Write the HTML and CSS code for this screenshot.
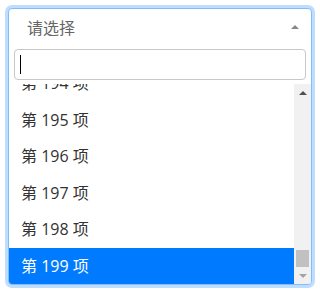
FILE: index.html
```html
<!DOCTYPE html>
<html lang="zh-CN">
<head>
<meta charset="utf-8">
<title>请选择</title>
<link rel="stylesheet" href="styles.css">
</head>
<body>
<div class="select">
  <div class="selection">
    <span class="placeholder">请选择</span>
    <span class="arrow"></span>
  </div>
  <div class="search-wrap">
    <input class="search" type="search">
    <span class="caret"></span>
  </div>
  <div class="results">
    <ul class="options">
      <li class="option">第 194 项</li>
      <li class="option">第 195 项</li>
      <li class="option">第 196 项</li>
      <li class="option">第 197 项</li>
      <li class="option">第 198 项</li>
      <li class="option selected">第 199 项</li>
    </ul>
    <div class="scrollbar">
      <div class="sb-btn"><span class="sb-up"></span></div>
      <div class="sb-track"><div class="sb-thumb"></div></div>
      <div class="sb-btn"><span class="sb-down"></span></div>
    </div>
  </div>
</div>
</body>
</html>
```

FILE: styles.css
```css
html, body {
  margin: 0;
  padding: 0;
  background: #fff;
}
body {
  padding: 8px;
  font-family: "Open Sans", "Noto Sans CJK SC", sans-serif;
  font-size: 16px;
  color: #333;
}
.select {
  border: 1px solid #80bdff;
  border-radius: 4px;
  box-shadow: 0 0 0 3px rgba(0, 123, 255, 0.25);
  overflow: hidden;
  background: #fff;
}
.selection {
  height: 37px;
  display: flex;
  align-items: center;
  justify-content: space-between;
  padding: 0 12px 0 18px;
}
.placeholder {
  color: #666;
  line-height: 24px;
}
.arrow {
  width: 0;
  height: 0;
  border-left: 4px solid transparent;
  border-right: 4px solid transparent;
  border-bottom: 4px solid #888;
  margin-top: -2px;
}
.search-wrap {
  position: relative;
  padding: 3px 5px 4px;
}
.search {
  display: block;
  box-sizing: border-box;
  width: 100%;
  height: 31px;
  border: 1px solid #c8c8c8;
  border-radius: 4px;
  padding: 0 5px;
  font: inherit;
  outline: none;
}
.caret {
  position: absolute;
  left: 11px;
  top: 9px;
  width: 1px;
  height: 19px;
  background: #000;
}
.results {
  display: flex;
  height: 200px;
}
.options {
  flex: 1;
  list-style: none;
  margin: 0;
  padding: 0;
  display: flex;
  flex-direction: column;
  justify-content: flex-end;
  overflow: hidden;
}
.option {
  flex: none;
  height: 36.5px;
  line-height: 36.5px;
  padding: 0 12px;
  white-space: nowrap;
}
.option.selected {
  background: #007bff;
  color: #fff;
}
.scrollbar {
  width: 17px;
  background: #f1f1f1;
  display: flex;
  flex-direction: column;
}
.sb-btn {
  height: 17px;
  display: flex;
  align-items: center;
  justify-content: center;
}
.sb-up {
  width: 0;
  height: 0;
  border-left: 4px solid transparent;
  border-right: 4px solid transparent;
  border-bottom: 4px solid #505050;
}
.sb-down {
  width: 0;
  height: 0;
  border-left: 4px solid transparent;
  border-right: 4px solid transparent;
  border-top: 4px solid #a3a3a3;
}
.sb-track {
  flex: 1;
  display: flex;
  flex-direction: column;
  justify-content: flex-end;
  padding: 0 2px;
}
.sb-thumb {
  height: 17px;
  background: #c1c1c1;
}
```
